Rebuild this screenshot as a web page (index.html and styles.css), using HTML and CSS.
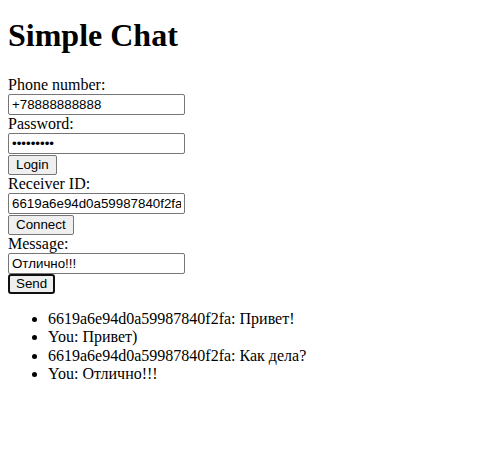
FILE: index.html
```html
<!DOCTYPE html>
<html>
<head>
<meta charset="utf-8">
<title>Simple Chat</title>
<link rel="stylesheet" href="styles.css">
</head>
<body>
<h1 class="title">Simple Chat</h1>
<div class="form">
<label class="lbl">Phone number:</label>
<input class="field" type="text" value="+78888888888">
<label class="lbl">Password:</label>
<input class="field" type="password" value="123456789">
<button class="btn">Login</button>
<label class="lbl">Receiver ID:</label>
<input class="field" type="text" value="6619a6e94d0a59987840f2fa">
<button class="btn">Connect</button>
<label class="lbl">Message:</label>
<input class="field" type="text" value="Отлично!!!">
<button class="btn btn-focus">Send</button>
</div>
<ul class="messages">
<li>6619a6e94d0a59987840f2fa: Привет!</li>
<li>You: Привет)</li>
<li>6619a6e94d0a59987840f2fa: Как дела?</li>
<li>You: Отлично!!!</li>
</ul>
</body>
</html>
```
FILE: styles.css
```css
body {
  margin: 0;
  padding: 8px;
  font-family: "Liberation Serif", "Times New Roman", serif;
  font-size: 16px;
  color: #000;
  background: #fff;
}
.title {
  font-size: 32px;
  font-weight: bold;
  line-height: 37px;
  margin: 9px 0 22px;
}
.form {
  display: flex;
  flex-direction: column;
  align-items: flex-start;
}
.lbl {
  display: block;
  height: 18px;
  line-height: 18px;
}
.field {
  display: block;
  box-sizing: border-box;
  width: 177px;
  height: 21px;
  margin: 0;
  padding: 1px 3px;
  border: 1px solid #767676;
  border-radius: 2px;
  background: #fff;
  color: #000;
  font-family: "Liberation Sans", Arial, sans-serif;
  font-size: 13.333px;
}
.btn {
  display: block;
  box-sizing: border-box;
  height: 20px;
  margin: 1px 0 0;
  padding: 0 7px;
  border: 1px solid #767676;
  border-radius: 2px;
  background: #efefef;
  color: #000;
  font-family: "Liberation Sans", Arial, sans-serif;
  font-size: 13.333px;
  line-height: 16px;
}
.btn-focus {
  margin-top: 0;
  padding: 0 6px;
  border: 2px solid #101010;
  border-radius: 3px;
}
.messages {
  margin: 16px 0;
  padding-left: 40px;
}
.messages li {
  line-height: 18.4px;
}
```
